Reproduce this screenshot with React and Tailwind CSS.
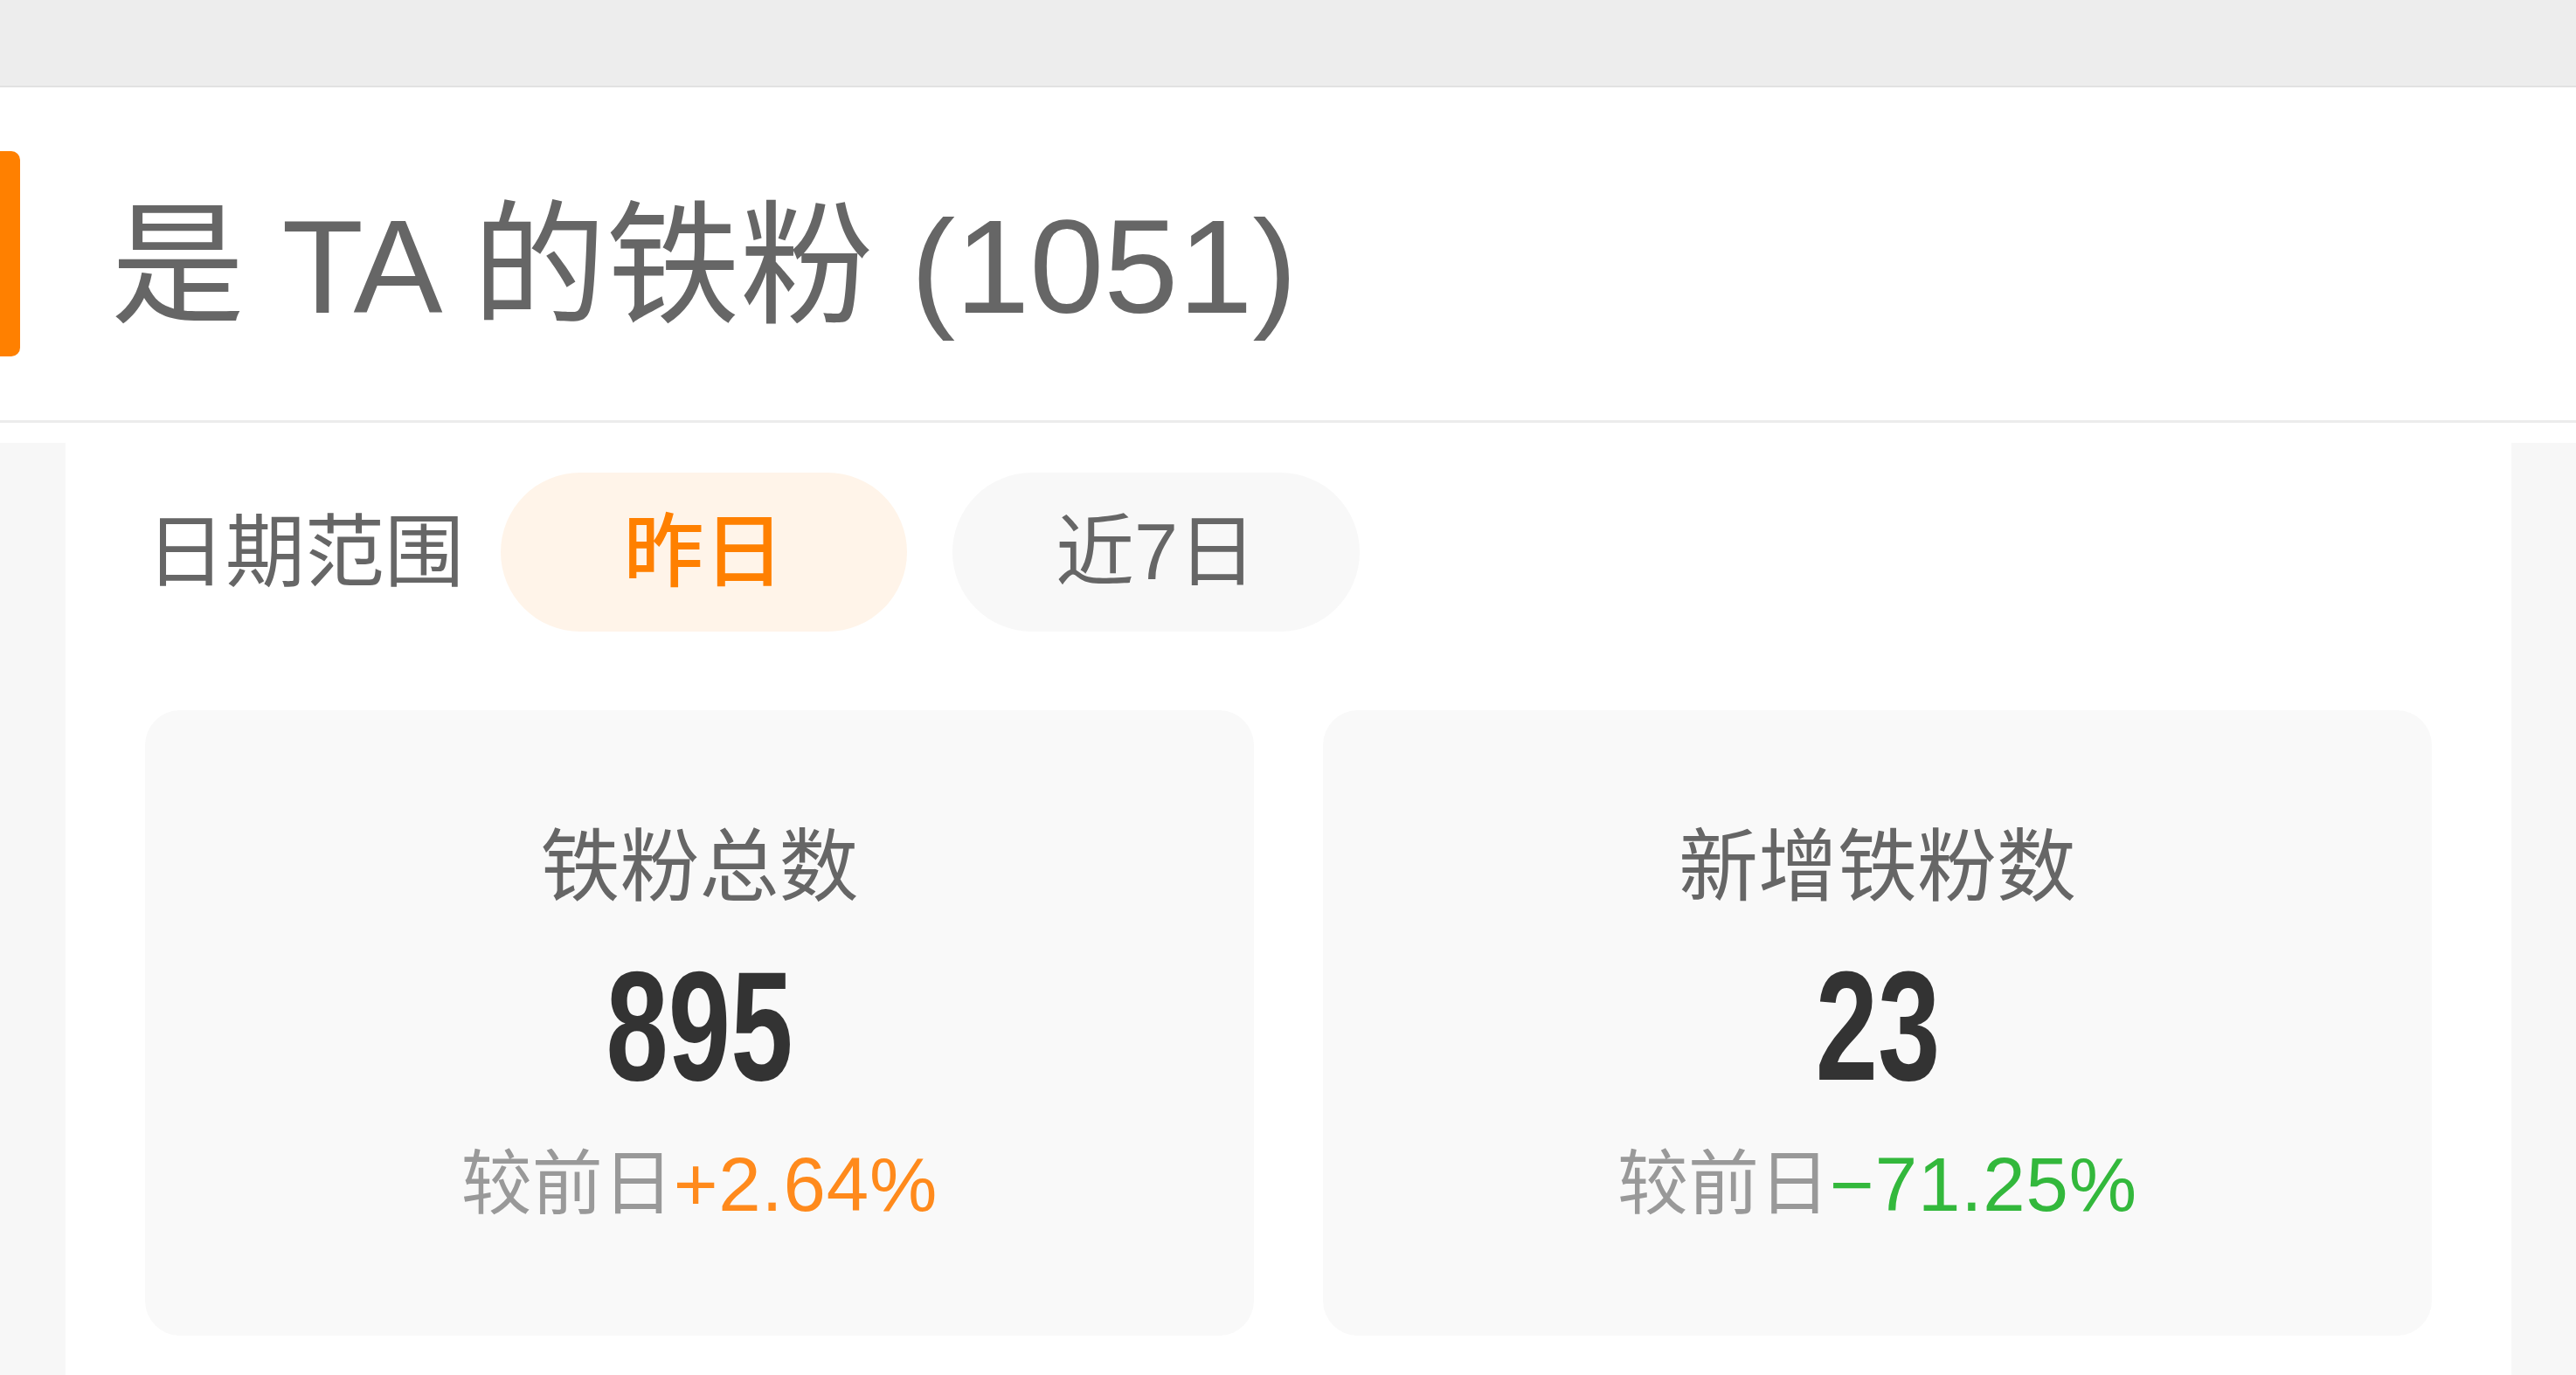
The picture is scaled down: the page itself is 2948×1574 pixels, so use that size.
import React from 'react';

const FONT = { fontFamily: '"Liberation Sans", "Noto Sans CJK SC", sans-serif' };

// --- stat card ---
const StatCard = ({ title, value, delta, deltaColor }) => (
  <div className="h-[716px] rounded-[40px] bg-[#f9f9f9] flex flex-col items-center pt-[134px]">
    <div className="text-[91px] leading-none text-[#666]">{title}</div>
    <div className="mt-[48px] text-[178px] leading-none font-bold text-[#333] scale-x-[0.72]">{value}</div>
    <div className="mt-[48px] flex items-center leading-none">
      <span className="text-[81px] text-[#999]">较前日</span>
      <span className={`text-[87px] tracking-[0.01em] ${deltaColor}`}>{delta}</span>
    </div>
  </div>
);

const App = () => {
  return (
    <div className="w-[2948px] h-[1574px] overflow-hidden bg-white flex flex-col" style={FONT}>
      {/* top bar */}
      <div className="h-[100px] shrink-0 bg-[#ededed] border-b-2 border-[#e2e2e2]" />

      {/* header */}
      <header className="h-[384px] shrink-0 flex items-center border-b-[3px] border-[#ececec]">
        <div className="w-[23px] h-[235px] rounded-r-[10px] bg-[#ff8000]" />
        <h1 className="ml-[104px] mt-[28px] text-[153px] leading-none font-normal text-[#666] whitespace-nowrap">
          是 TA 的铁粉 (1051)
        </h1>
      </header>

      {/* body */}
      <div className="flex-1 pt-[23px] flex">
        <div className="w-[75px] shrink-0 bg-[#f7f7f7]" />
        <main className="flex-1 flex flex-col">
          <div className="mt-[34px] pl-[92px] flex items-center">
            <span className="text-[91px] leading-none text-[#666]">日期范围</span>
            <button className="ml-[42px] w-[465px] h-[182px] rounded-full bg-[#fff4e9] text-[92px] leading-none font-medium text-[#ff8000]">
              昨日
            </button>
            <button className="ml-[52px] w-[466px] h-[182px] rounded-full bg-[#f8f8f8] text-[90px] leading-none text-[#666]">
              近7日
            </button>
          </div>

          <div className="mt-[90px] px-[91px] grid grid-cols-2 gap-[79px]">
            <StatCard title="铁粉总数" value="895" delta="+2.64%" deltaColor="text-[#ff8a1c]" />
            <StatCard title="新增铁粉数" value="23" delta="−71.25%" deltaColor="text-[#33b83c]" />
          </div>
        </main>
        <div className="w-[74px] shrink-0 bg-[#f7f7f7]" />
      </div>
    </div>
  );
};

export default App;
